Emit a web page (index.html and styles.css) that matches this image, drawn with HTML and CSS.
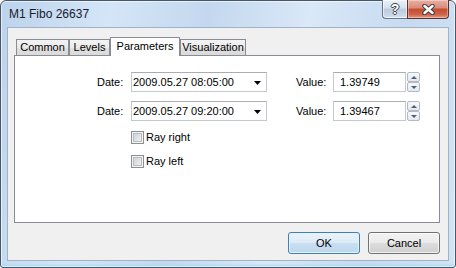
FILE: index.html
```html
<!DOCTYPE html>
<html lang="en">
<head>
    <meta charset="UTF-8">
    <meta name="viewport" content="width=device-width, initial-scale=1.0">
    <title>M1 Fibo 26637</title>
    <link rel="stylesheet" href="styles.css">
</head>
<body>
    <div class="window">
        <div class="titlebar">
            <span class="title">M1 Fibo 26637</span>
            <div class="caption-buttons">
                <button class="caption-btn help-btn">?</button>
                <button class="caption-btn close-btn">
                    <svg width="13" height="11" viewBox="0 0 13 11">
                        <path d="M2.5 2 L10.5 9 M10.5 2 L2.5 9" stroke="#3b3f45" stroke-width="4.4" stroke-linecap="round"/>
                        <path d="M2.5 2 L10.5 9 M10.5 2 L2.5 9" stroke="#ffffff" stroke-width="2.4" stroke-linecap="round"/>
                    </svg>
                </button>
            </div>
        </div>

        <div class="client">
            <div class="tabs">
                <div class="tab tab-common">Common</div>
                <div class="tab tab-levels">Levels</div>
                <div class="tab tab-params active">Parameters</div>
                <div class="tab tab-visual">Visualization</div>
            </div>

            <div class="tab-panel">
                <div class="field-row">
                    <span class="field-label">Date:</span>
                    <div class="datetime">
                        <span>2009.05.27 08:05:00</span>
                        <svg class="drop-arrow" width="7" height="4" viewBox="0 0 7 4"><path d="M0 0 H7 L3.5 4 Z" fill="#000"/></svg>
                    </div>
                    <span class="field-label value-label">Value:</span>
                    <div class="number-input">1.39749</div>
                    <div class="spinner">
                        <span class="spin spin-up"></span>
                        <span class="spin spin-down"></span>
                    </div>
                </div>
                <div class="field-row">
                    <span class="field-label">Date:</span>
                    <div class="datetime">
                        <span>2009.05.27 09:20:00</span>
                        <svg class="drop-arrow" width="7" height="4" viewBox="0 0 7 4"><path d="M0 0 H7 L3.5 4 Z" fill="#000"/></svg>
                    </div>
                    <span class="field-label value-label">Value:</span>
                    <div class="number-input">1.39467</div>
                    <div class="spinner">
                        <span class="spin spin-up"></span>
                        <span class="spin spin-down"></span>
                    </div>
                </div>

                <label class="check-row"><span class="checkbox"></span>Ray right</label>
                <label class="check-row"><span class="checkbox"></span>Ray left</label>
            </div>

            <div class="dialog-buttons">
                <button class="btn btn-default">OK</button>
                <button class="btn">Cancel</button>
            </div>
        </div>
    </div>
</body>
</html>
```

FILE: styles.css
```css
* {
    margin: 0;
    padding: 0;
    box-sizing: border-box;
}

body {
    width: 456px;
    height: 268px;
    overflow: hidden;
    font-family: "Liberation Sans", Arial, sans-serif;
    font-size: 11px;
    color: #000;
    background: #fff;
}

/* window frame */
.window {
    width: 456px;
    height: 268px;
    display: flex;
    flex-direction: column;
    padding: 0 6px 6px;
    border: 1px solid #46576c;
    border-radius: 6px 6px 3px 3px;
    background: linear-gradient(100deg, #bcd3ec 0%, #d4e5f7 22%, #c3d8ef 42%, #dae8f7 62%, #c6daf1 82%, #d3e3f5 100%);
    box-shadow: inset 0 0 0 1px rgba(255, 255, 255, 0.6), inset 0 -3px 2px -1px #9fdcf6;
}

.titlebar {
    height: 26px;
    flex-shrink: 0;
    display: flex;
    justify-content: space-between;
    align-items: flex-start;
}

.title {
    padding: 5px 0 0 2px;
    font-size: 12px;
    line-height: 16px;
    color: #15202c;
}

.caption-buttons {
    display: flex;
    margin-top: -1px;
}

.caption-btn {
    height: 19px;
    display: flex;
    align-items: center;
    justify-content: center;
    border: 1px solid #6a7889;
    border-top: none;
    cursor: pointer;
}

.help-btn {
    width: 25px;
    border-right: none;
    border-radius: 0 0 0 4px;
    background: linear-gradient(#e9f0f8 0%, #d6e1ed 45%, #bccbdc 50%, #c9d7e7 85%, #dbe6f2 100%);
    box-shadow: inset 0 0 0 1px rgba(255, 255, 255, 0.55);
    font-family: "Liberation Sans", Arial, sans-serif;
    font-size: 14px;
    font-weight: bold;
    color: #fff;
    text-shadow: -1px 0 #3d434b, 1px 0 #3d434b, 0 -1px #3d434b, 0 1px #3d434b;
}

.close-btn {
    width: 42px;
    border-color: #5b302c;
    border-radius: 0 0 4px 0;
    background: linear-gradient(#eab0a2 0%, #d98a77 45%, #c44b31 50%, #cf6248 80%, #e39a84 100%);
    box-shadow: inset 0 0 0 1px rgba(255, 255, 255, 0.35);
}

/* client area */
.client {
    flex: 1;
    display: flex;
    flex-direction: column;
    padding: 9px 8px 6px 6px;
    border: 1px solid #a2b2c5;
    background: #f0f0f0;
}

.tabs {
    height: 18px;
    flex-shrink: 0;
    display: flex;
    align-items: flex-end;
    padding-left: 2px;
}

.tab {
    height: 16px;
    border: 1px solid #898c95;
    border-bottom: none;
    background: linear-gradient(#f3f3f3, #ebebeb 50%, #e1e1e1 51%, #dadada);
    text-align: center;
    line-height: 15px;
}

.tab-common { width: 53px; }
.tab-levels { width: 41px; }
.tab-params { width: 70px; }
.tab-visual { width: 66px; }

.tab.active {
    position: relative;
    z-index: 1;
    height: 19px;
    margin-bottom: -1px;
    background: #fff;
    line-height: 16px;
}

.tab-panel {
    height: 168px;
    flex-shrink: 0;
    padding: 16px 0 0 82px;
    border: 1px solid #898c95;
    background: #fff;
}

.field-row {
    height: 20px;
    display: flex;
    align-items: center;
}

.field-row + .field-row {
    margin-top: 9px;
}

.field-label {
    width: 34px;
}

.value-label {
    width: 37px;
    margin-left: 29px;
}

.datetime,
.number-input {
    height: 20px;
    display: flex;
    align-items: center;
    border: 1px solid #c4c8d0;
    border-top-color: #abadb3;
}

.datetime {
    width: 136px;
    justify-content: space-between;
    padding: 0 5px 0 1px;
}

.drop-arrow {
    margin-top: 1px;
}

.number-input {
    width: 73px;
    padding-left: 6px;
}

.spinner {
    width: 13px;
    height: 20px;
    margin-left: 1px;
    display: flex;
    flex-direction: column;
}

.spin {
    flex: 1;
    display: flex;
    align-items: center;
    justify-content: center;
    border: 1px solid #b3bac4;
    border-radius: 2px;
    background: linear-gradient(#f7f8fa, #e4e8ed);
}

.spin::after {
    content: "";
    border-left: 3px solid transparent;
    border-right: 3px solid transparent;
}

.spin-up::after {
    border-bottom: 3px solid #4e607c;
}

.spin-down::after {
    border-top: 3px solid #4e607c;
}

.check-row {
    height: 13px;
    display: flex;
    align-items: center;
    gap: 2px;
    margin: 10px 0 0 34px;
    line-height: 13px;
}

.check-row + .check-row {
    margin-top: 11px;
}

.checkbox {
    width: 13px;
    height: 13px;
    border: 1px solid #8e8f8f;
    background: linear-gradient(135deg, #c6cacf, #eef0f2 80%, #f7f7f7);
    box-shadow: inset 0 0 0 1px #f4f4f4, inset 0 0 0 2px #b7bcc2;
}

/* OK / Cancel */
.dialog-buttons {
    height: 22px;
    margin-top: 9px;
    display: flex;
    justify-content: flex-end;
    gap: 8px;
}

.btn {
    width: 72px;
    height: 22px;
    border: 1px solid #707070;
    border-radius: 3px;
    background: linear-gradient(#f2f2f2 0%, #ebebeb 50%, #dddddd 51%, #cfcfcf 100%);
    box-shadow: inset 0 0 0 1px rgba(255, 255, 255, 0.75);
    font-family: "Liberation Sans", Arial, sans-serif;
    font-size: 11px;
    color: #000;
    cursor: pointer;
}

.btn-default {
    border-color: #3c7fb1;
    background: linear-gradient(#eaf3fb 0%, #dceaf6 50%, #c9dff1 51%, #bdd7ee 100%);
    box-shadow: inset 0 0 0 1px #e6f5fd;
}
```
